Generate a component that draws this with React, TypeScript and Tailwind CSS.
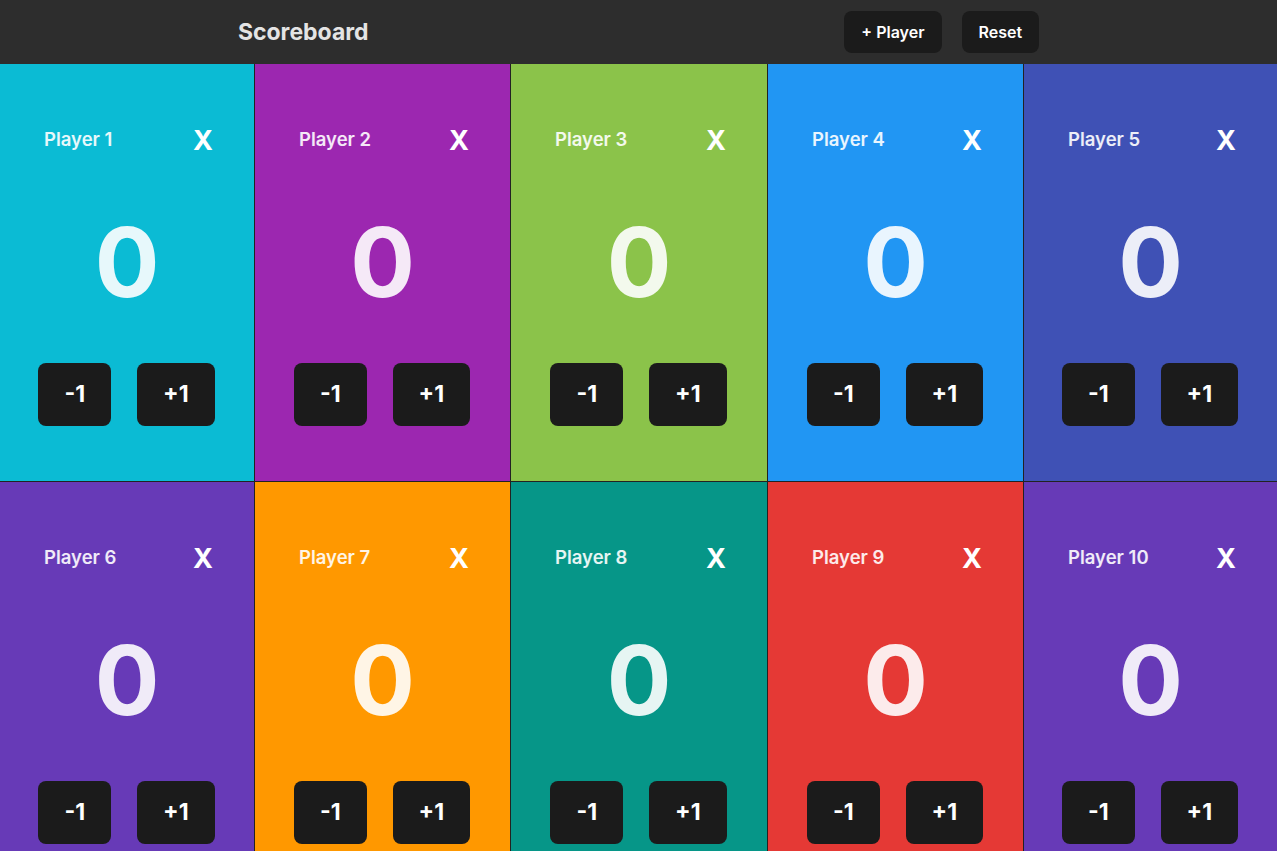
import React from "react";

const colors = [
  "bg-[#0bbbd4]",
  "bg-[#9c27b0]",
  "bg-[#8bc34a]",
  "bg-[#2196f3]",
  "bg-[#3f51b5]",
  "bg-[#673ab7]",
  "bg-[#ff9800]",
  "bg-[#069688]",
  "bg-[#e53935]",
  "bg-[#673ab7]",
];

function Card({ name, color }: { name: string; color: string }) {
  return (
    <div className={`${color} h-[417px] flex flex-col`}>
      <div className="flex items-center justify-between pl-[44px] pr-[41px] pt-[60px] h-[90px]">
        <span className="text-[18.5px] font-semibold text-white/90 leading-none">{name}</span>
        <span className="text-[27px] font-bold text-white leading-none pt-[2px]">X</span>
      </div>
      <div className="flex justify-center mt-[48px] h-[120px] items-center">
        <span className="text-[96px] font-bold text-white/90 leading-none">0</span>
      </div>
      <div className="flex justify-center gap-[26px] mt-[41px] ml-[-1px]">
        <button className="h-[63px] px-[26px] rounded-lg bg-[#1b1b1b] text-white text-[23px] font-bold">-1</button>
        <button className="h-[63px] px-[26px] rounded-lg bg-[#1b1b1b] text-white text-[23px] font-bold">+1</button>
      </div>
    </div>
  );
}

export default function App() {
  return (
    <div className="w-[1277px] h-[851px] overflow-hidden bg-[#2d2d2d]" style={{ fontFamily: "Inter, 'Noto Sans', sans-serif" }}>
      <header className="h-[64px] flex items-center justify-around bg-[#2d2d2d]">
        <h1 className="text-[23px] font-bold text-[#e4e4e4]">Scoreboard</h1>
        <div className="flex gap-[20px]">
          <button className="h-[42px] px-[17px] rounded-lg bg-[#1b1b1b] text-white text-[16px] font-semibold">+ Player</button>
          <button className="h-[42px] px-[17px] rounded-lg bg-[#1b1b1b] text-white text-[16px] font-semibold">Reset</button>
        </div>
      </header>
      <div className="grid grid-cols-[254px_255px_256px_255px_1fr] gap-px bg-[#222]">
        {colors.map((c, i) => (
          <Card key={i} name={`Player ${i + 1}`} color={c} />
        ))}
      </div>
    </div>
  );
}
